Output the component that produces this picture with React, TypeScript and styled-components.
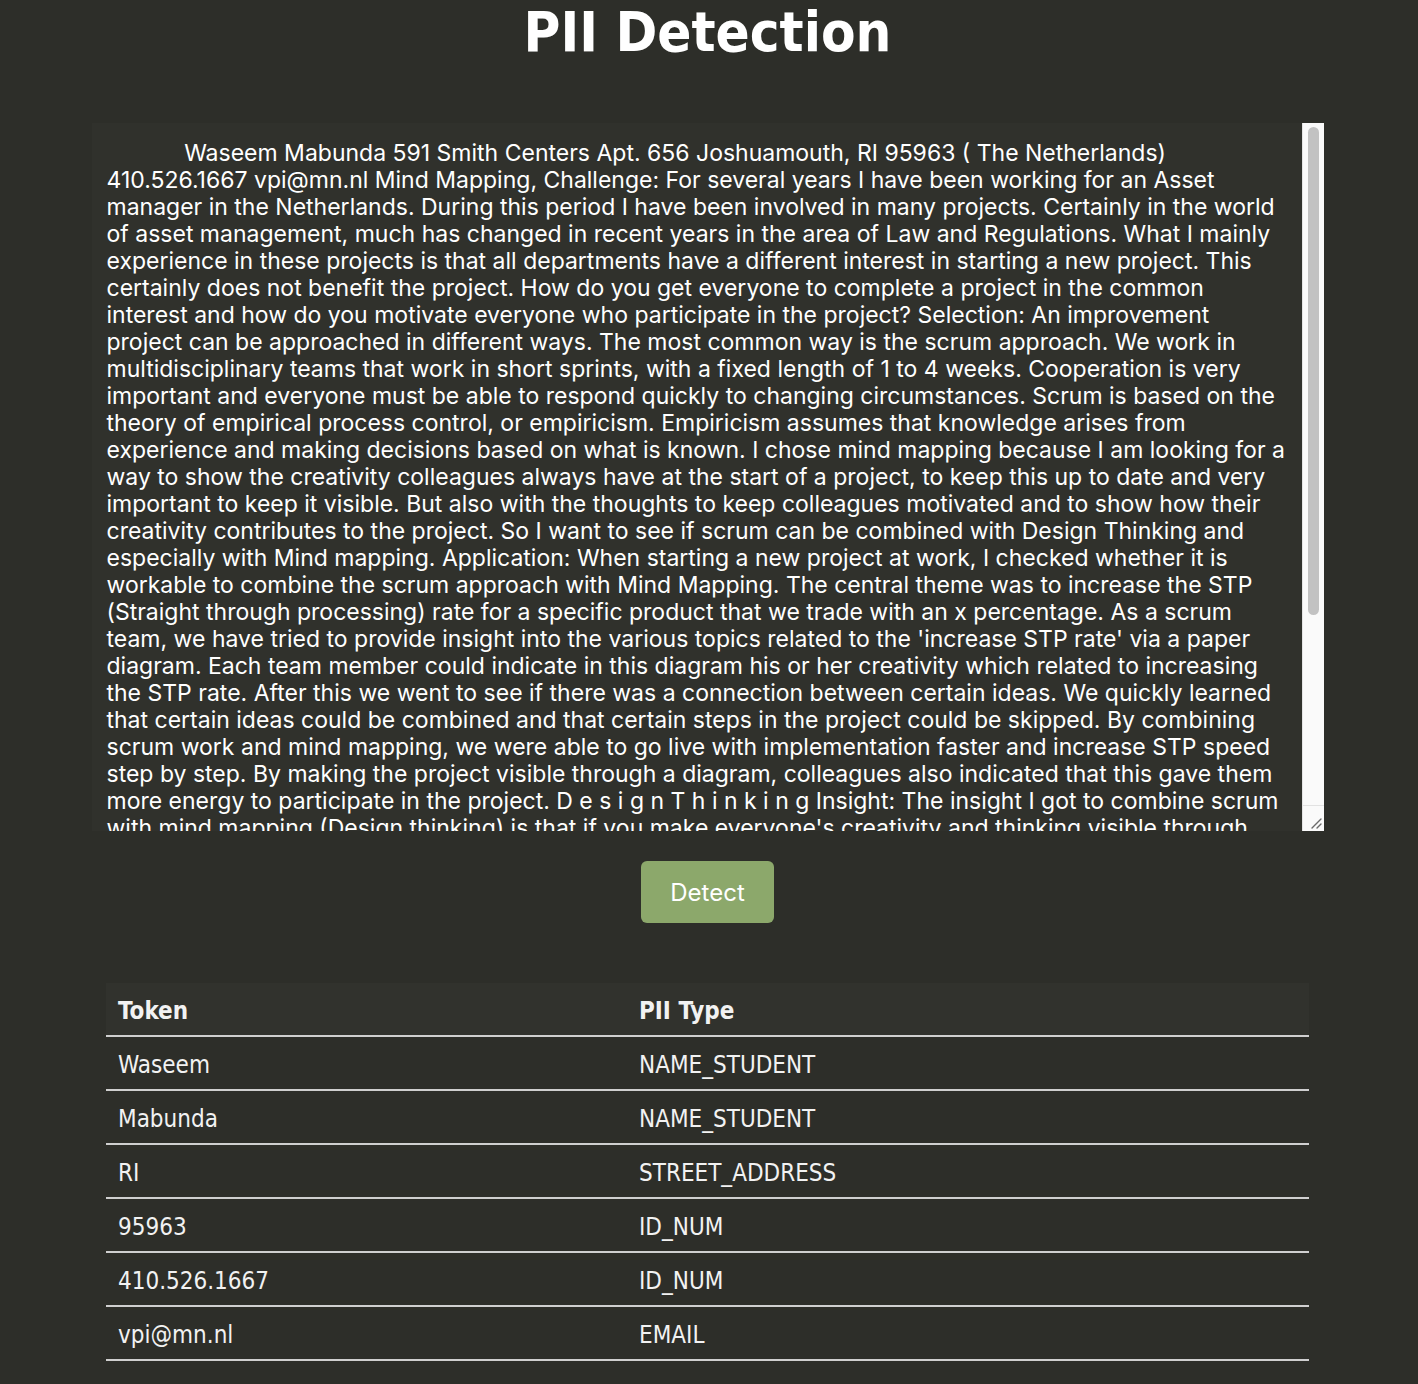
import React from 'react';
import styled, { createGlobalStyle } from 'styled-components';

const Global = createGlobalStyle`
  html, body { margin: 0; padding: 0; background: #2d2e29; }
  body { font-family: "DejaVu Sans Condensed", "DejaVu Sans", sans-serif; color: #fff; }
`;

const Page = styled.main`
  display: flex;
  flex-direction: column;
  align-items: center;
  padding: 0 3px 24px 0;
`;

const Title = styled.h1`
  margin: 0;
  font-family: "DejaVu Sans Condensed", "DejaVu Sans", sans-serif;
  font-size: 56px;
  font-weight: bold;
  line-height: 64px;
  color: #fff;
`;

const EditorFrame = styled.div`
  margin-top: 59px;
  width: 1232px;
  height: 708px;
  display: flex;
  background: #30312c;
`;

const Editor = styled.textarea`
  flex: 1;
  height: 100%;
  box-sizing: border-box;
  padding: 17px 14px 0 15px;
  border: none;
  outline: none;
  background: transparent;
  color: #fff;
  font-family: Inter, "Open Sans", sans-serif;
  font-size: 23px;
  letter-spacing: 0;
  line-height: 27px;
  resize: none;
  overflow: hidden;
  scrollbar-width: none;
`;

const ScrollTrack = styled.div`
  width: 22px;
  height: 100%;
  box-sizing: border-box;
  display: flex;
  flex-direction: column;
  background: #fafafa;
  border-left: 1px solid #e4e4e4;
`;

const ScrollThumb = styled.div`
  margin: 4px 5px 0 5px;
  height: 488px;
  border-radius: 6px;
  background: #c2c2c2;
`;

const ScrollSpacer = styled.div`
  flex: 1;
`;

const ResizeCorner = styled.div`
  height: 23px;
  border-top: 1px solid #e2e2e2;
  display: flex;
  align-items: flex-end;
  justify-content: flex-end;
  padding: 0 2px 2px 0;
`;

const DetectButton = styled.button`
  margin-top: 30px;
  width: 133px;
  height: 62px;
  border: none;
  border-radius: 6px;
  background: #8ca86b;
  color: #fff;
  font-family: Inter, "Open Sans", sans-serif;
  font-size: 24px;
  cursor: pointer;
`;

const Table = styled.table`
  margin-top: 60px;
  width: 1203px;
  border-collapse: collapse;
  font-family: "DejaVu Sans Condensed", "DejaVu Sans", sans-serif;
  font-size: 24px;
  color: #f2f2f2;
`;

const HeadRow = styled.tr`
  background: #31322d;
`;

const Th = styled.th<{ $w?: number }>`
  text-align: left;
  font-weight: bold;
  height: 49px;
  padding: 3px 12px 0;
  border-bottom: 2px solid #cfcfcf;
  ${(p) => (p.$w ? `width: ${p.$w}px;` : '')}
`;

const Td = styled.td`
  height: 49px;
  padding: 3px 12px 0;
  border-bottom: 2px solid #cfcfcf;
`;

const TEXT = `            Waseem Mabunda 591 Smith Centers Apt. 656 Joshuamouth, RI 95963 ( The Netherlands) 410.526.1667 vpi@mn.nl Mind Mapping, Challenge: For several years I have been working for an Asset manager in the Netherlands. During this period I have been involved in many projects. Certainly in the world of asset management, much has changed in recent years in the area of Law and Regulations. What I mainly experience in these projects is that all departments have a different interest in starting a new project. This certainly does not benefit the project. How do you get everyone to complete a project in the common interest and how do you motivate everyone who participate in the project? Selection: An improvement project can be approached in different ways. The most common way is the scrum approach. We work in multidisciplinary teams that work in short sprints, with a fixed length of 1 to 4 weeks. Cooperation is very important and everyone must be able to respond quickly to changing circumstances. Scrum is based on the theory of empirical process control, or empiricism. Empiricism assumes that knowledge arises from experience and making decisions based on what is known. I chose mind mapping because I am looking for a way to show the creativity colleagues always have at the start of a project, to keep this up to date and very important to keep it visible. But also with the thoughts to keep colleagues motivated and to show how their creativity contributes to the project. So I want to see if scrum can be combined with Design Thinking and especially with Mind mapping. Application: When starting a new project at work, I checked whether it is workable to combine the scrum approach with Mind Mapping. The central theme was to increase the STP (Straight through processing) rate for a specific product that we trade with an x percentage. As a scrum team, we have tried to provide insight into the various topics related to the 'increase STP rate' via a paper diagram. Each team member could indicate in this diagram his or her creativity which related to increasing the STP rate. After this we went to see if there was a connection between certain ideas. We quickly learned that certain ideas could be combined and that certain steps in the project could be skipped. By combining scrum work and mind mapping, we were able to go live with implementation faster and increase STP speed step by step. By making the project visible through a diagram, colleagues also indicated that this gave them more energy to participate in the project. D e s i g n T h i n k i n g Insight: The insight I got to combine scrum with mind mapping (Design thinking) is that if you make everyone's creativity and thinking visible through mind mapping, everyone feels involved in the project.`;

const ROWS: [string, string][] = [
  ['Waseem', 'NAME_STUDENT'],
  ['Mabunda', 'NAME_STUDENT'],
  ['RI', 'STREET_ADDRESS'],
  ['95963', 'ID_NUM'],
  ['410.526.1667', 'ID_NUM'],
  ['vpi@mn.nl', 'EMAIL'],
];

function Grip() {
  return (
    <svg width="12" height="12" viewBox="0 0 12 12" aria-hidden="true">
      <path d="M2 11 L11 2 M7 11 L11 7" stroke="#6a6a6a" strokeWidth="1.4" strokeLinecap="round" fill="none" />
    </svg>
  );
}

export default function App() {
  return (
    <>
      <Global />
      <Page>
        <Title>PII Detection</Title>
        <EditorFrame>
          <Editor defaultValue={TEXT} spellCheck={false} />
          <ScrollTrack>
            <ScrollThumb />
            <ScrollSpacer />
            <ResizeCorner>
              <Grip />
            </ResizeCorner>
          </ScrollTrack>
        </EditorFrame>
        <DetectButton>Detect</DetectButton>
        <Table>
          <thead>
            <HeadRow>
              <Th $w={497}>Token</Th>
              <Th>PII Type</Th>
            </HeadRow>
          </thead>
          <tbody>
            {ROWS.map(([t, k], i) => (
              <tr key={i}>
                <Td>{t}</Td>
                <Td>{k}</Td>
              </tr>
            ))}
          </tbody>
        </Table>
      </Page>
    </>
  );
}
